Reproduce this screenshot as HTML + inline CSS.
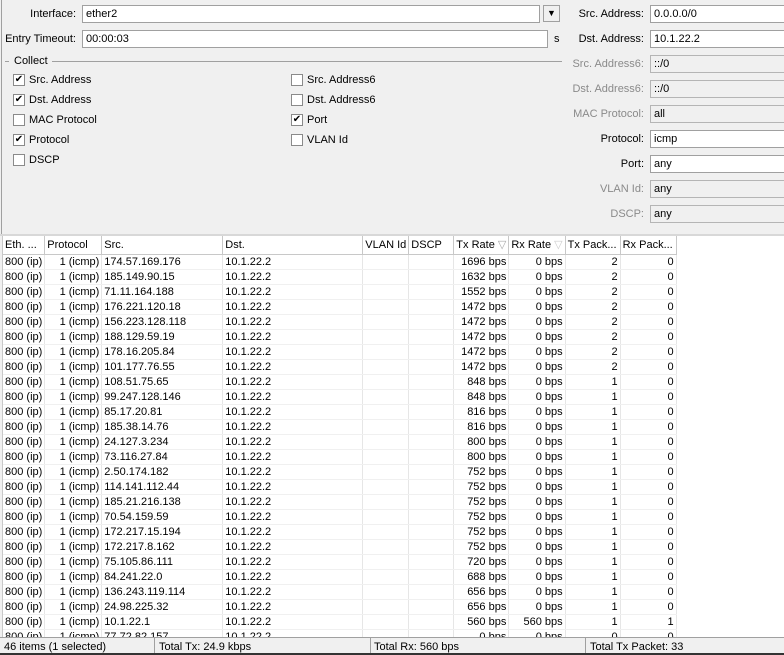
<!DOCTYPE html>
<html><head><meta charset="utf-8"><style>
*{box-sizing:border-box;margin:0;padding:0}
body{width:784px;height:655px;overflow:hidden;background:#f0f0f0;font-family:"Liberation Sans",sans-serif;font-size:11px;color:#000;position:relative}
.a{position:absolute;white-space:nowrap}
.lbl{position:absolute;text-align:right;white-space:nowrap;line-height:17px}
.inp{position:absolute;height:18px;background:#fff;border:1px solid #a0a0a0;padding-left:3px;line-height:16px}
.dis{background:#f0f0f0;border-color:#b5b5b5}
.g{color:#8a8a8a}
.cb{position:absolute;width:12px;height:12px;border:1px solid #8a8a8a;background:#fff;font-size:10px;line-height:10px;text-align:center}
.cl{position:absolute;line-height:14px}
table{position:absolute;left:3px;top:236px;border-collapse:collapse;background:#fff;table-layout:fixed}
td,th{height:15px;line-height:14px;padding:0 2px;border-right:1px solid #e6e6e6;border-bottom:1px solid #f0f0f0;font-weight:normal;overflow:hidden;white-space:nowrap}
th{height:18px;text-align:left;border-right:1px solid #c8c8c8;border-bottom:1px solid #c8c8c8;background:#fff}
.r{text-align:right}
</style></head><body>
<div class="a" style="left:1px;top:0;width:1px;height:234px;background:#a0a0a0"></div>
<div class="lbl" style="left:0;width:76px;top:6px">Interface:</div>
<div class="inp" style="left:82px;top:5px;width:458px">ether2</div>
<div class="a" style="left:543px;top:5px;width:17px;height:17px;border:1px solid #a0a0a0;background:#f0f0f0;text-align:center;font-size:9px;line-height:15px">&#9660;</div>
<div class="lbl" style="left:0;width:76px;top:31px">Entry Timeout:</div>
<div class="inp" style="left:82px;top:30px;width:466px">00:00:03</div>
<div class="a" style="left:554px;top:33px">s</div>
<div class="a" style="left:5px;top:61px;width:4px;height:1px;background:#a0a0a0"></div>
<div class="a" style="left:14px;top:54px;line-height:14px">Collect</div>
<div class="a" style="left:52px;top:61px;width:110px;height:1px;background:#a0a0a0;width:510px"></div>
<div class="cb" style="left:13px;top:74px">✔</div><div class="cl" style="left:29px;top:73px">Src. Address</div>
<div class="cb" style="left:13px;top:94px">✔</div><div class="cl" style="left:29px;top:93px">Dst. Address</div>
<div class="cb" style="left:13px;top:114px"></div><div class="cl" style="left:29px;top:113px">MAC Protocol</div>
<div class="cb" style="left:13px;top:134px">✔</div><div class="cl" style="left:29px;top:133px">Protocol</div>
<div class="cb" style="left:13px;top:154px"></div><div class="cl" style="left:29px;top:153px">DSCP</div>
<div class="cb" style="left:291px;top:74px"></div><div class="cl" style="left:307px;top:73px">Src. Address6</div>
<div class="cb" style="left:291px;top:94px"></div><div class="cl" style="left:307px;top:93px">Dst. Address6</div>
<div class="cb" style="left:291px;top:114px">✔</div><div class="cl" style="left:307px;top:113px">Port</div>
<div class="cb" style="left:291px;top:134px"></div><div class="cl" style="left:307px;top:133px">VLAN Id</div>

<div class="lbl" style="left:560px;width:84px;top:6px">Src. Address:</div><div class="inp" style="left:650px;top:5px;width:140px">0.0.0.0/0</div>
<div class="lbl" style="left:560px;width:84px;top:31px">Dst. Address:</div><div class="inp" style="left:650px;top:30px;width:140px">10.1.22.2</div>
<div class="lbl g" style="left:560px;width:84px;top:56px">Src. Address6:</div><div class="inp dis" style="left:650px;top:55px;width:140px">::/0</div>
<div class="lbl g" style="left:560px;width:84px;top:81px">Dst. Address6:</div><div class="inp dis" style="left:650px;top:80px;width:140px">::/0</div>
<div class="lbl g" style="left:560px;width:84px;top:106px">MAC Protocol:</div><div class="inp dis" style="left:650px;top:105px;width:140px">all</div>
<div class="lbl" style="left:560px;width:84px;top:131px">Protocol:</div><div class="inp" style="left:650px;top:130px;width:140px">icmp</div>
<div class="lbl" style="left:560px;width:84px;top:156px">Port:</div><div class="inp" style="left:650px;top:155px;width:140px">any</div>
<div class="lbl g" style="left:560px;width:84px;top:181px">VLAN Id:</div><div class="inp dis" style="left:650px;top:180px;width:140px">any</div>
<div class="lbl g" style="left:560px;width:84px;top:206px">DSCP:</div><div class="inp dis" style="left:650px;top:205px;width:140px">any</div>
<div class="a" style="left:0;top:234px;width:784px;height:2px;background:#d8d8d8"></div>
<div class="a" style="left:0;top:236px;width:784px;height:402px;background:#fff"></div>
<div class="a" style="left:0;top:236px;width:3px;height:402px;background:#f0f0f0;border-right:1px solid #c8c8c8"></div>

<table>
<colgroup><col style="width:41px"><col style="width:57px"><col style="width:121px"><col style="width:140px"><col style="width:46px"><col style="width:45px"><col style="width:55px"><col style="width:55px"><col style="width:55px"><col style="width:56px"></colgroup>
<tr><th>Eth. ...</th><th>Protocol</th><th>Src.</th><th>Dst.</th><th>VLAN Id</th><th>DSCP</th><th>Tx Rate <span style="color:#aaa">▽</span></th><th>Rx Rate <span style="color:#ccc">▽</span></th><th>Tx Pack...</th><th>Rx Pack...</th></tr>
<tr><td>800 (ip)</td><td class="r">1 (icmp)</td><td>174.57.169.176</td><td>10.1.22.2</td><td></td><td></td><td class="r">1696 bps</td><td class="r">0 bps</td><td class="r">2</td><td class="r">0</td></tr>
<tr><td>800 (ip)</td><td class="r">1 (icmp)</td><td>185.149.90.15</td><td>10.1.22.2</td><td></td><td></td><td class="r">1632 bps</td><td class="r">0 bps</td><td class="r">2</td><td class="r">0</td></tr>
<tr><td>800 (ip)</td><td class="r">1 (icmp)</td><td>71.11.164.188</td><td>10.1.22.2</td><td></td><td></td><td class="r">1552 bps</td><td class="r">0 bps</td><td class="r">2</td><td class="r">0</td></tr>
<tr><td>800 (ip)</td><td class="r">1 (icmp)</td><td>176.221.120.18</td><td>10.1.22.2</td><td></td><td></td><td class="r">1472 bps</td><td class="r">0 bps</td><td class="r">2</td><td class="r">0</td></tr>
<tr><td>800 (ip)</td><td class="r">1 (icmp)</td><td>156.223.128.118</td><td>10.1.22.2</td><td></td><td></td><td class="r">1472 bps</td><td class="r">0 bps</td><td class="r">2</td><td class="r">0</td></tr>
<tr><td>800 (ip)</td><td class="r">1 (icmp)</td><td>188.129.59.19</td><td>10.1.22.2</td><td></td><td></td><td class="r">1472 bps</td><td class="r">0 bps</td><td class="r">2</td><td class="r">0</td></tr>
<tr><td>800 (ip)</td><td class="r">1 (icmp)</td><td>178.16.205.84</td><td>10.1.22.2</td><td></td><td></td><td class="r">1472 bps</td><td class="r">0 bps</td><td class="r">2</td><td class="r">0</td></tr>
<tr><td>800 (ip)</td><td class="r">1 (icmp)</td><td>101.177.76.55</td><td>10.1.22.2</td><td></td><td></td><td class="r">1472 bps</td><td class="r">0 bps</td><td class="r">2</td><td class="r">0</td></tr>
<tr><td>800 (ip)</td><td class="r">1 (icmp)</td><td>108.51.75.65</td><td>10.1.22.2</td><td></td><td></td><td class="r">848 bps</td><td class="r">0 bps</td><td class="r">1</td><td class="r">0</td></tr>
<tr><td>800 (ip)</td><td class="r">1 (icmp)</td><td>99.247.128.146</td><td>10.1.22.2</td><td></td><td></td><td class="r">848 bps</td><td class="r">0 bps</td><td class="r">1</td><td class="r">0</td></tr>
<tr><td>800 (ip)</td><td class="r">1 (icmp)</td><td>85.17.20.81</td><td>10.1.22.2</td><td></td><td></td><td class="r">816 bps</td><td class="r">0 bps</td><td class="r">1</td><td class="r">0</td></tr>
<tr><td>800 (ip)</td><td class="r">1 (icmp)</td><td>185.38.14.76</td><td>10.1.22.2</td><td></td><td></td><td class="r">816 bps</td><td class="r">0 bps</td><td class="r">1</td><td class="r">0</td></tr>
<tr><td>800 (ip)</td><td class="r">1 (icmp)</td><td>24.127.3.234</td><td>10.1.22.2</td><td></td><td></td><td class="r">800 bps</td><td class="r">0 bps</td><td class="r">1</td><td class="r">0</td></tr>
<tr><td>800 (ip)</td><td class="r">1 (icmp)</td><td>73.116.27.84</td><td>10.1.22.2</td><td></td><td></td><td class="r">800 bps</td><td class="r">0 bps</td><td class="r">1</td><td class="r">0</td></tr>
<tr><td>800 (ip)</td><td class="r">1 (icmp)</td><td>2.50.174.182</td><td>10.1.22.2</td><td></td><td></td><td class="r">752 bps</td><td class="r">0 bps</td><td class="r">1</td><td class="r">0</td></tr>
<tr><td>800 (ip)</td><td class="r">1 (icmp)</td><td>114.141.112.44</td><td>10.1.22.2</td><td></td><td></td><td class="r">752 bps</td><td class="r">0 bps</td><td class="r">1</td><td class="r">0</td></tr>
<tr><td>800 (ip)</td><td class="r">1 (icmp)</td><td>185.21.216.138</td><td>10.1.22.2</td><td></td><td></td><td class="r">752 bps</td><td class="r">0 bps</td><td class="r">1</td><td class="r">0</td></tr>
<tr><td>800 (ip)</td><td class="r">1 (icmp)</td><td>70.54.159.59</td><td>10.1.22.2</td><td></td><td></td><td class="r">752 bps</td><td class="r">0 bps</td><td class="r">1</td><td class="r">0</td></tr>
<tr><td>800 (ip)</td><td class="r">1 (icmp)</td><td>172.217.15.194</td><td>10.1.22.2</td><td></td><td></td><td class="r">752 bps</td><td class="r">0 bps</td><td class="r">1</td><td class="r">0</td></tr>
<tr><td>800 (ip)</td><td class="r">1 (icmp)</td><td>172.217.8.162</td><td>10.1.22.2</td><td></td><td></td><td class="r">752 bps</td><td class="r">0 bps</td><td class="r">1</td><td class="r">0</td></tr>
<tr><td>800 (ip)</td><td class="r">1 (icmp)</td><td>75.105.86.111</td><td>10.1.22.2</td><td></td><td></td><td class="r">720 bps</td><td class="r">0 bps</td><td class="r">1</td><td class="r">0</td></tr>
<tr><td>800 (ip)</td><td class="r">1 (icmp)</td><td>84.241.22.0</td><td>10.1.22.2</td><td></td><td></td><td class="r">688 bps</td><td class="r">0 bps</td><td class="r">1</td><td class="r">0</td></tr>
<tr><td>800 (ip)</td><td class="r">1 (icmp)</td><td>136.243.119.114</td><td>10.1.22.2</td><td></td><td></td><td class="r">656 bps</td><td class="r">0 bps</td><td class="r">1</td><td class="r">0</td></tr>
<tr><td>800 (ip)</td><td class="r">1 (icmp)</td><td>24.98.225.32</td><td>10.1.22.2</td><td></td><td></td><td class="r">656 bps</td><td class="r">0 bps</td><td class="r">1</td><td class="r">0</td></tr>
<tr><td>800 (ip)</td><td class="r">1 (icmp)</td><td>10.1.22.1</td><td>10.1.22.2</td><td></td><td></td><td class="r">560 bps</td><td class="r">560 bps</td><td class="r">1</td><td class="r">1</td></tr>
<tr><td>800 (ip)</td><td class="r">1 (icmp)</td><td>77.72.82.157</td><td>10.1.22.2</td><td></td><td></td><td class="r">0 bps</td><td class="r">0 bps</td><td class="r">0</td><td class="r">0</td></tr>
</table>

<div class="a" style="left:0;top:637px;width:784px;height:18px;background:#f0f0f0;border-top:1px solid #a0a0a0;border-bottom:2px solid #333"></div>
<div class="a" style="left:4px;top:640px;line-height:14px">46 items (1 selected)</div>
<div class="a" style="left:154px;top:638px;width:1px;height:15px;background:#a0a0a0"></div>
<div class="a" style="left:159px;top:640px;line-height:14px">Total Tx: 24.9 kbps</div>
<div class="a" style="left:370px;top:638px;width:1px;height:15px;background:#a0a0a0"></div>
<div class="a" style="left:374px;top:640px;line-height:14px">Total Rx: 560 bps</div>
<div class="a" style="left:585px;top:638px;width:1px;height:15px;background:#a0a0a0"></div>
<div class="a" style="left:590px;top:640px;line-height:14px">Total Tx Packet: 33</div>
</body></html>
